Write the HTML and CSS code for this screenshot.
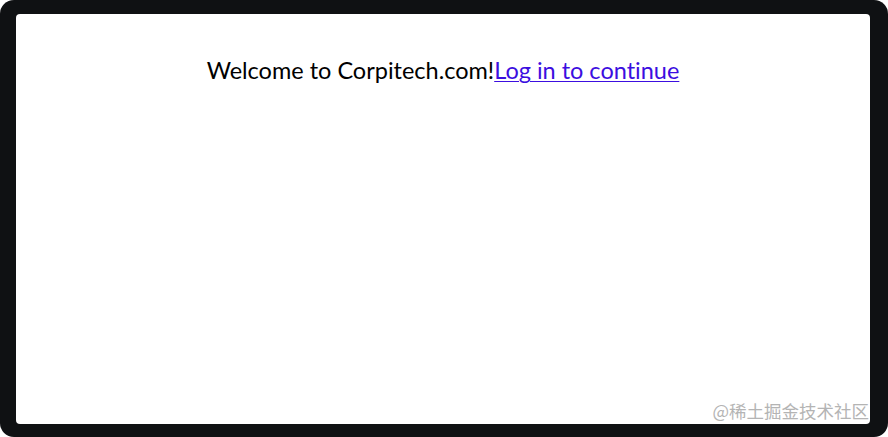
FILE: index.html
```html
<!DOCTYPE html>
<html>
<head>
<meta charset="utf-8">
<link rel="stylesheet" href="styles.css">
</head>
<body>
<div class="frame">
  <div class="page">
    <p class="welcome">Welcome to Corpitech.com!<a href="#">Log in to continue</a></p>
  </div>
  <div class="watermark">@稀土掘金技术社区</div>
</div>
</body>
</html>
```
FILE: styles.css
```css
html, body {
  margin: 0;
  padding: 0;
  width: 888px;
  height: 437px;
  overflow: hidden;
  background: #ffffff;
}
.frame {
  position: relative;
  box-sizing: border-box;
  width: 888px;
  height: 437px;
  background: #0f1113;
  border-radius: 14px;
  padding: 14px 18px 13px 16px;
}
.page {
  background: #ffffff;
  border-radius: 4px;
  height: 100%;
  box-sizing: border-box;
  padding-top: 42px;
}
.welcome {
  margin: 0;
  text-align: center;
  font-family: Lato, "Open Sans", sans-serif;
  font-size: 23.5px;
  line-height: 28px;
  color: #000000;
  font-variant-ligatures: none;
}
.welcome a {
  color: #3c0ee0;
  text-decoration: underline;
  text-underline-offset: 2px;
  text-decoration-thickness: 1px;
}
.watermark {
  position: absolute;
  right: 19px;
  bottom: 15px;
  font-family: "Noto Sans CJK SC", sans-serif;
  font-size: 17.5px;
  line-height: 22px;
  color: #b4b4b4;
}
```
